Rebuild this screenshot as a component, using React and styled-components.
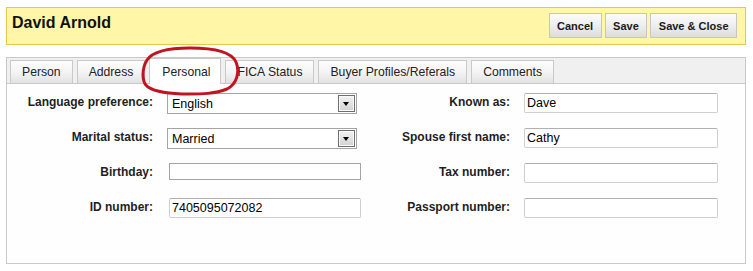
import React from 'react';
import styled, { createGlobalStyle } from 'styled-components';

const GlobalStyle = createGlobalStyle`
  html, body {
    margin: 0;
    padding: 0;
    background: #ffffff;
    font-family: "Liberation Sans", Arial, sans-serif;
    color: #1a1a1a;
  }
`;

const Page = styled.div`
  position: relative;
  width: 740px;
  padding: 7px 7px 0 6px;
`;

const Header = styled.div`
  display: flex;
  justify-content: space-between;
  align-items: flex-start;
  height: 36px;
  padding: 0 8px 0 5px;
  background: #fff6a8;
  border: 1px solid #e6c64e;
`;

const Title = styled.h1`
  margin: 5px 0 0 0;
  font-size: 16px;
  line-height: 19px;
  font-weight: bold;
  color: #111;
`;

const Actions = styled.div`
  display: flex;
  gap: 3px;
  margin-top: 5px;
`;

const Button = styled.button`
  height: 25px;
  padding: 0 7.5px;
  font-family: inherit;
  font-size: 11px;
  font-weight: bold;
  color: #1a1a1a;
  background: linear-gradient(#fbfbfb 0%, #f0f0f0 45%, #dcdcdc 100%);
  border: 1px solid #c6c6c6;
  border-radius: 0;
`;

const Panel = styled.div`
  margin-top: 12px;
  border: 1px solid #c9c9c9;
  background: #fefefe;
`;

const TabStrip = styled.div`
  display: flex;
  align-items: flex-end;
  gap: 4px;
  height: 25px;
  padding: 0 3px;
  background: #f0f0f0;
  border-bottom: 1px solid #c9c9c9;
`;

const Tab = styled.div`
  display: flex;
  align-items: center;
  height: ${(p) => (p.$active ? '25px' : '22px')};
  margin-bottom: ${(p) => (p.$active ? '-1px' : '0')};
  padding: 0 ${(p) => (p.$active ? '10px 0 12px' : '11px')};
  font-size: 12.2px;
  color: #222;
  border: 1px solid #c9c9c9;
  border-bottom: none;
  background: ${(p) =>
    p.$active ? '#ffffff' : 'linear-gradient(#fdfdfd 0%, #f4f4f4 50%, #e2e2e2 100%)'};
`;

const Form = styled.div`
  display: grid;
  grid-template-columns: 146px 194px 135px 194px;
  grid-auto-rows: 21px;
  column-gap: 14px;
  row-gap: 14px;
  padding: 9px 0 44px 0;
`;

const Label = styled.div`
  padding-top: 2px;
  text-align: right;
  font-size: 12px;
  line-height: 14px;
  font-weight: bold;
  color: #1e1e1e;
  white-space: nowrap;
`;

const Select = styled.div`
  display: flex;
  align-items: center;
  justify-content: space-between;
  box-sizing: border-box;
  width: 190px;
  height: 21px;
  padding: 0 1px 0 4px;
  font-size: 12.5px;
  color: #000;
  background: #fff;
  border: 1px solid #a4a4a4;
`;

const Arrow = styled.span`
  position: relative;
  box-sizing: border-box;
  width: 17px;
  height: 17px;
  border: 1px solid #6e6e6e;
  box-shadow: inset 0 0 0 1px #fafafa;
  background: linear-gradient(#f2f2f2, #d2d2d2);

  &::after {
    content: '';
    position: absolute;
    left: 4px;
    top: 6px;
    border-left: 3.5px solid transparent;
    border-right: 3.5px solid transparent;
    border-top: 4px solid #000;
  }
`;

const Input = styled.div`
  box-sizing: border-box;
  width: ${(p) => p.$width || '194px'};
  height: ${(p) => p.$height || '20px'};
  margin-left: ${(p) => p.$offset || '0'};
  padding: 0 2px;
  font-size: 12.5px;
  line-height: 19px;
  color: #000;
  background: #fff;
  border: 1px solid ${(p) => (p.$dark ? '#a4a4a4' : '#cfcfcf')};
  border-top-color: ${(p) => (p.$dark ? '#a4a4a4' : '#b0b0b0')};
  border-radius: ${(p) => (p.$dark ? '0' : '2px')};
`;

const Highlight = styled.svg`
  position: absolute;
  left: 139px;
  top: 46px;
  width: 102px;
  height: 50px;
  pointer-events: none;
`;

const tabs = ['Person', 'Address', 'Personal', 'FICA Status', 'Buyer Profiles/Referals', 'Comments'];

export default function App() {
  return (
    <>
      <GlobalStyle />
      <Page>
        <Header>
          <Title>David Arnold</Title>
          <Actions>
            <Button>Cancel</Button>
            <Button>Save</Button>
            <Button>Save &amp; Close</Button>
          </Actions>
        </Header>

        <Panel>
          <TabStrip>
            {tabs.map((t) => (
              <Tab key={t} $active={t === 'Personal'}>{t}</Tab>
            ))}
          </TabStrip>

          <Form>
            <Label>Language preference:</Label>
            <Select>English<Arrow /></Select>
            <Label>Known as:</Label>
            <Input>Dave</Input>

            <Label>Marital status:</Label>
            <Select>Married<Arrow /></Select>
            <Label>Spouse first name:</Label>
            <Input>Cathy</Input>

            <Label>Birthday:</Label>
            <Input $dark $offset="2px" $width="192px" $height="17px" />
            <Label>Tax number:</Label>
            <Input />

            <Label>ID number:</Label>
            <Input $offset="2px" $width="192px">7405095072082</Input>
            <Label>Passport number:</Label>
            <Input />
          </Form>
        </Panel>

        <Highlight viewBox="0 0 102 50">
          <path
            d="M8 14 C14 5 30 2 51 2 C74 2 92 5 97 16 C101 26 98 38 88 43 C76 48 62 48 50 48 C34 48 18 47 9 41 C2 36 3 22 8 14 Z"
            fill="none"
            stroke="#c01520"
            strokeWidth="3"
          />
        </Highlight>
      </Page>
    </>
  );
}
